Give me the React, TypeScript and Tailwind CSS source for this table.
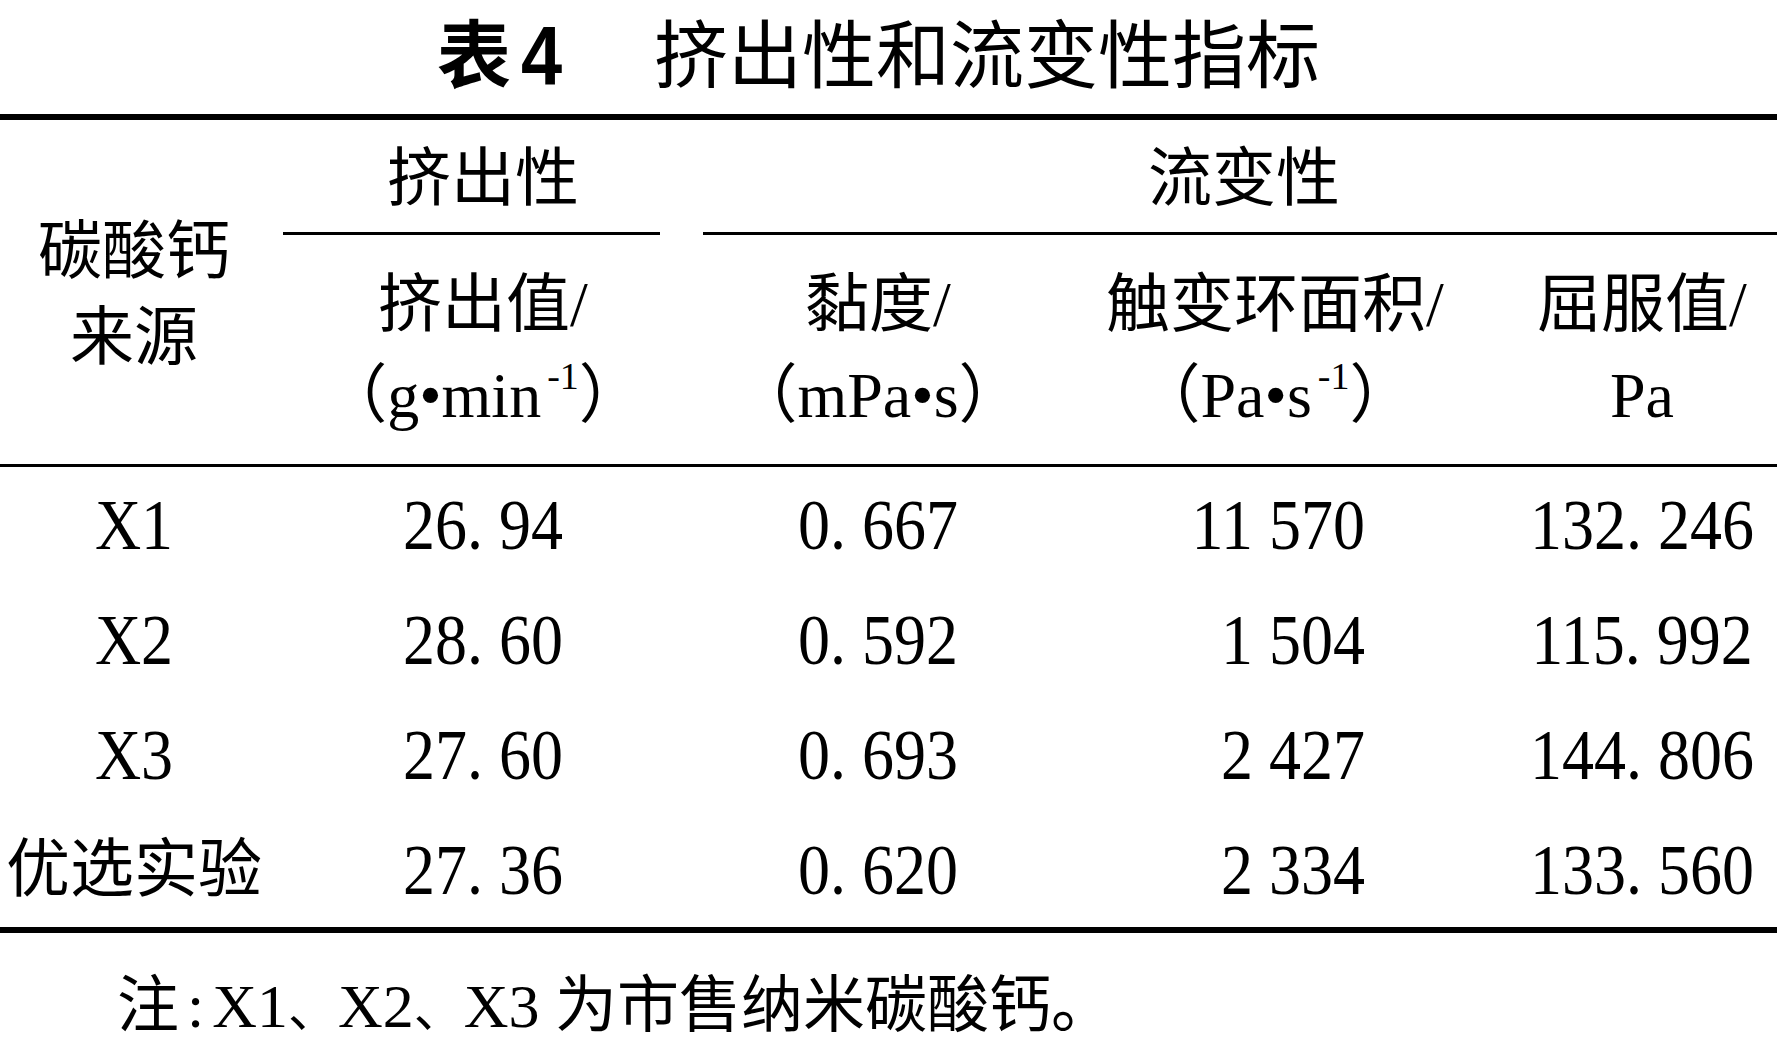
import React from "react";

const FONT = "font-['Liberation_Serif','Noto_Sans_CJK_SC',serif]";

function Num({ children }: { children: React.ReactNode }) {
  return <span className="inline-block scale-y-[1.12]">{children}</span>;
}

function Dun() {
  return <span className="text-[50px]">、</span>;
}

const rows = [
  ["X1", "26. 94", "0. 667", "11 570", "132. 246"],
  ["X2", "28. 60", "0. 592", "1 504", "115. 992"],
  ["X3", "27. 60", "0. 693", "2 427", "144. 806"],
  ["优选实验", "27. 36", "0. 620", "2 334", "133. 560"],
];

export default function App() {
  return (
    <div className={`w-[1777px] h-[1061px] bg-white text-black ${FONT}`}>
      {/* Title */}
      <div className="h-[114px] flex items-center justify-center pr-[20px]">
        <span className="text-[74px] leading-none font-bold">
          表
          <span className="inline-block ml-[10px] scale-y-[1.12] font-['Liberation_Sans',sans-serif]">4</span>
        </span>
        <span className="w-[92px]" />
        <span className="text-[74px] leading-none">挤出性和流变性指标</span>
      </div>
      <div className="h-[6px] bg-black" />

      {/* Header */}
      <div className="grid grid-cols-[283px_400px_390px_404px_300px] grid-rows-[112px_3px_229px] text-[64px]">
        <div className="row-span-3 flex flex-col items-center justify-center pt-[6px] pr-[15px] leading-[86px]">
          <span>碳酸钙</span>
          <span>来源</span>
        </div>
        <div className="flex items-center justify-center pt-[6px] leading-none">挤出性</div>
        <div className="col-span-3 flex items-center justify-center pt-[6px] pl-[28px] leading-none">
          流变性
        </div>
        <div className="mr-[23px] bg-black" />
        <div className="col-span-3 ml-[20px] bg-black" />
        <div className="flex flex-col items-center justify-center leading-[91px]">
          <span>挤出值/</span>
          <span>
            （g•min<sup className="text-[38px] relative -top-[28px] ml-[6px]">-1</sup>）
          </span>
        </div>
        <div className="flex flex-col items-center justify-center leading-[91px]">
          <span>黏度/</span>
          <span>（mPa•s）</span>
        </div>
        <div className="flex flex-col items-center justify-center leading-[91px]">
          <span>触变环面积/</span>
          <span>
            （Pa•s<sup className="text-[38px] relative -top-[28px] ml-[6px]">-1</sup>）
          </span>
        </div>
        <div className="flex flex-col items-center justify-center leading-[91px] pl-[30px]">
          <span>屈服值/</span>
          <span>Pa</span>
        </div>
      </div>
      <div className="h-[3px] bg-black" />

      {/* Body */}
      <div className="flex flex-col text-[64px]">
        {rows.map((r) => (
          <div
            key={r[0]}
            className="grid grid-cols-[283px_400px_390px_404px_300px] h-[115px] items-center leading-none"
          >
            <div className="text-center pr-[15px]">
              {r[0].startsWith("X") ? <Num>{r[0]}</Num> : r[0]}
            </div>
            <div className="text-center">
              <Num>{r[1]}</Num>
            </div>
            <div className="text-center">
              <Num>{r[2]}</Num>
            </div>
            <div className="flex justify-center">
              <div className="w-[180px] text-right">
                <Num>{r[3]}</Num>
              </div>
            </div>
            <div className="text-center pl-[30px]">
              <Num>{r[4]}</Num>
            </div>
          </div>
        ))}
      </div>
      <div className="h-[6px] bg-black" />

      {/* Note */}
      <div className="mt-[42px] pl-[117px] text-[62px] leading-[62px]">
        注<span className="mx-[8px]">:</span>X1<Dun />X2<Dun />X3 为市售纳米碳酸钙。
      </div>
    </div>
  );
}
